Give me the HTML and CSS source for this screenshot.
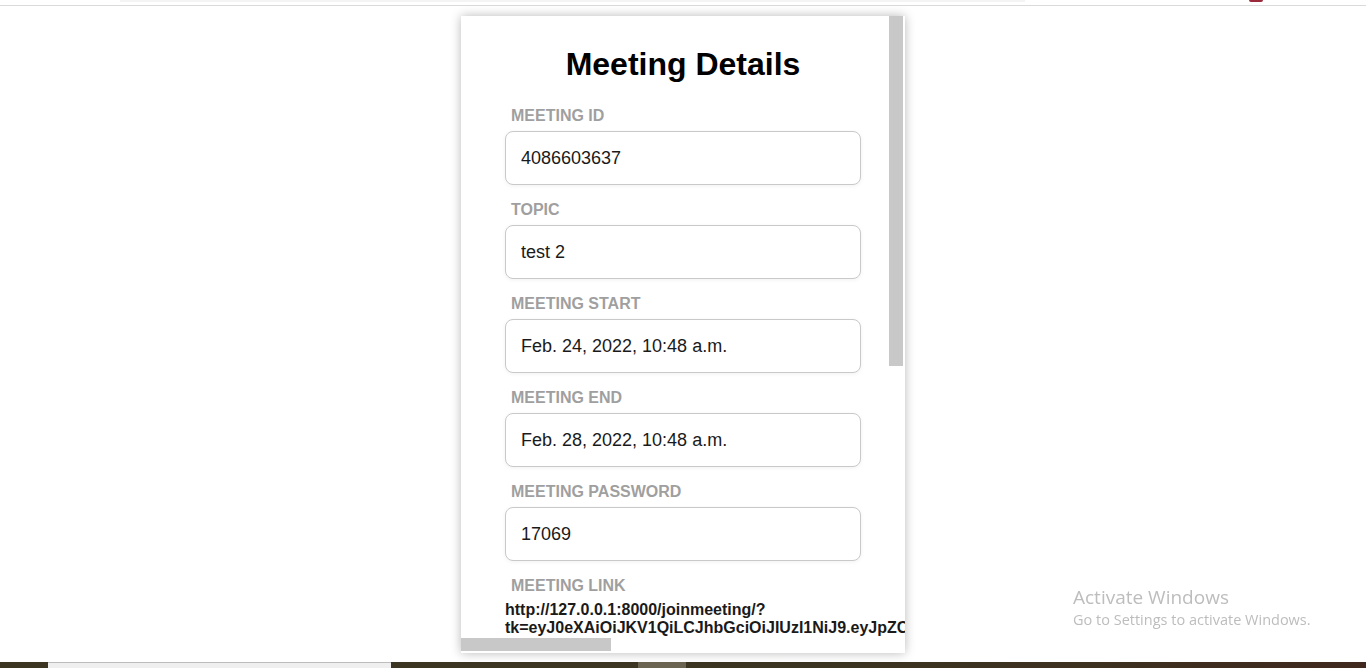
FILE: index.html
```html
<!DOCTYPE html>
<html lang="en">
<head>
<meta charset="utf-8">
<title>Meeting Details</title>
<link rel="stylesheet" href="styles.css">
</head>
<body>
<div class="page">
  <header class="topbar">
    <div class="topbar-strip"></div>
    <div class="topbar-mark"></div>
  </header>
  <main class="main">
    <section class="card">
      <div class="card-body">
        <h1 class="title">Meeting Details</h1>
        <div class="field">
          <label class="label">Meeting ID</label>
          <input class="input" type="text" value="4086603637" readonly>
        </div>
        <div class="field">
          <label class="label">Topic</label>
          <input class="input" type="text" value="test 2" readonly>
        </div>
        <div class="field">
          <label class="label">Meeting Start</label>
          <input class="input" type="text" value="Feb. 24, 2022, 10:48 a.m." readonly>
        </div>
        <div class="field">
          <label class="label">Meeting End</label>
          <input class="input" type="text" value="Feb. 28, 2022, 10:48 a.m." readonly>
        </div>
        <div class="field">
          <label class="label">Meeting Password</label>
          <input class="input" type="text" value="17069" readonly>
        </div>
        <div class="field">
          <label class="label">Meeting Link</label>
          <a class="link" href="#">http://127.0.0.1:8000/joinmeeting/?tk=eyJ0eXAiOiJKV1QiLCJhbGciOiJIUzI1NiJ9.eyJpZCI6NDA4</a>
        </div>
      </div>
      <div class="vthumb"></div>
      <div class="hthumb"></div>
    </section>
  </main>
  <footer class="taskbar">
    <div class="tb-dark tb-start"></div>
    <div class="tb-light"></div>
    <div class="tb-dark tb-mid"></div>
    <div class="tb-gray"></div>
    <div class="tb-dark tb-end"></div>
  </footer>
</div>
<div class="watermark">
  <p class="wm-title">Activate Windows</p>
  <p class="wm-sub">Go to Settings to activate Windows.</p>
</div>
</body>
</html>
```
FILE: styles.css
```css
* { box-sizing: border-box; }
html, body { margin: 0; padding: 0; background: #fff; }
body { font-family: "Liberation Sans", Arial, sans-serif; overflow: hidden; }

.page {
  height: 100vh;
  display: flex;
  flex-direction: column;
}

.topbar {
  position: relative;
  height: 6px;
  flex: 0 0 6px;
  border-bottom: 1px solid #dadada;
}
.topbar-strip {
  margin-left: 120px;
  width: 905px;
  height: 2px;
  background: #f4f4f4;
}
.topbar-mark {
  position: absolute;
  left: 1249px;
  top: 0;
  width: 14px;
  height: 2px;
  border-radius: 0 0 6px 6px;
  background: #9b2b3c;
}

.main {
  flex: 1;
  display: flex;
  justify-content: center;
  align-items: flex-start;
  padding-top: 10px;
}

.card {
  position: relative;
  width: 444px;
  height: 637px;
  overflow: hidden;
  background: #fff;
  box-shadow: 0 0 10px rgba(0, 0, 0, 0.28);
}

.card-body {
  padding: 30px 44px 0;
}

.vthumb {
  position: absolute;
  top: 0;
  right: 2px;
  width: 14px;
  height: 350px;
  background: #c8c8c8;
}
.hthumb {
  position: absolute;
  left: 0;
  bottom: 2px;
  width: 150px;
  height: 13px;
  background: #c8c8c8;
}

.title {
  margin: 0 0 24px;
  font-size: 32px;
  font-weight: bold;
  text-align: center;
  color: #000;
  line-height: 37px;
}

.field {
  display: flex;
  flex-direction: column;
  margin-bottom: 16px;
}

.label {
  display: block;
  padding-left: 6px;
  margin-bottom: 6px;
  font-size: 16px;
  line-height: 18px;
  font-weight: bold;
  text-transform: uppercase;
  color: #9f9f9f;
}

.input {
  width: 356px;
  height: 54px;
  padding: 0 15px;
  border: 1px solid #c9c9c9;
  border-radius: 8px;
  font-family: "Liberation Sans", Arial, sans-serif;
  font-size: 18px;
  color: #1a1a1a;
  background: #fff;
  box-shadow: 0 1px 4px rgba(0, 0, 0, 0.06);
  outline: none;
}

.link {
  font-size: 16px;
  line-height: 18px;
  font-weight: bold;
  color: #1a1a1a;
  text-decoration: none;
  width: 356px;
}

.taskbar {
  flex: 0 0 6px;
  display: flex;
  margin-top: 9px;
}
.tb-dark { background: #3b3522; }
.tb-start { width: 48px; }
.tb-light { width: 343px; background: #efefef; border-top: 1px solid #bdbdbd; }
.tb-mid { width: 247px; }
.tb-gray { width: 48px; background: #6b6453; }
.tb-end { flex: 1; background: linear-gradient(90deg, #3b3522 0%, #3d3120 60%, #40281f 100%); }

.watermark {
  position: fixed;
  left: 1073px;
  top: 585px;
  width: 260px;
  font-family: "Open Sans", "Noto Sans", sans-serif;
  color: #bdbdbd;
  white-space: nowrap;
}
.wm-title { margin: 0; font-size: 19px; line-height: 25px; }
.wm-sub { margin: 0; font-size: 14.5px; line-height: 20px; }
```
